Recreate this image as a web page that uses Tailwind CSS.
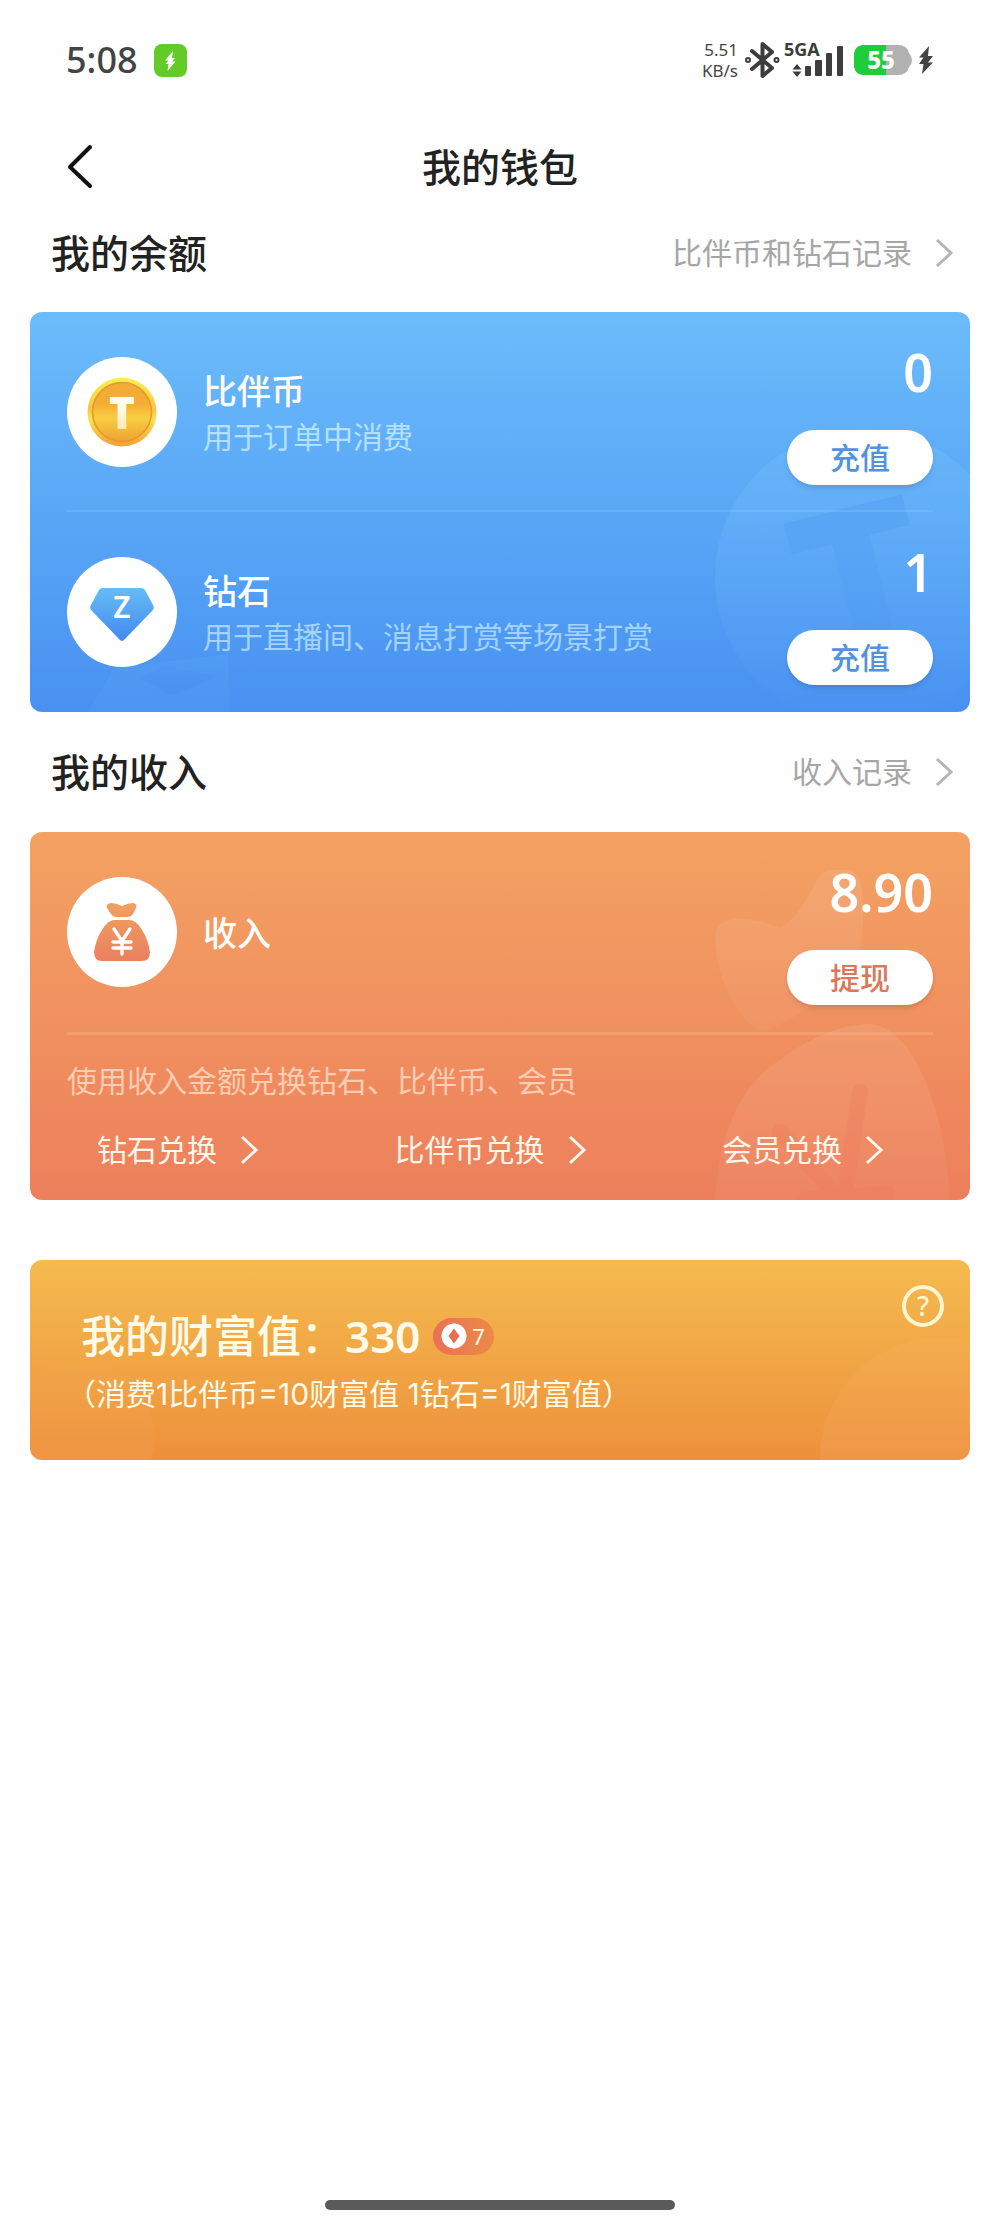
<!DOCTYPE html>
<html lang="zh-CN">
<head>
  <meta charset="UTF-8">
  <meta name="viewport" content="width=device-width, initial-scale=1.0">
  <title>我的钱包</title>
  <script src="https://cdn.jsdelivr.net/npm/@tailwindcss/browser@4"></script>
</head>
<body class="bg-[#fefefe] min-h-screen flex flex-col font-['Noto_Sans','Noto_Sans_CJK_SC',sans-serif] text-[#222]">

  <!-- status bar -->
  <div class="h-[120px] px-[66px] flex items-center justify-between text-[#444]">
    <div class="flex items-center gap-4">
      <span class="text-[36px] leading-[40px] font-medium">5:08</span>
      <svg class="size-[33px]" viewBox="0 0 33 33" aria-hidden="true">
        <rect width="33" height="33" rx="8" fill="#62cb28"/>
        <path d="M19 7 11 16.500h3.500L11.500 20h3L13.500 27l8-9.500h-3.500l3-3.500h-3z" fill="#fff"/>
      </svg>
    </div>
    <div class="flex items-center gap-[6px]">
      <div class="text-[17px] leading-[21px] text-right">5.51<br>KB/s</div>
      <svg class="w-[36px] h-[38px]" viewBox="1 0 36 38" fill="none" stroke="#3d3d3d" stroke-width="4" stroke-linejoin="round" stroke-linecap="round" aria-hidden="true">
        <path d="M9 10 29 27 19.500 35V3L29 11 9 28"/>
        <circle cx="5" cy="19" r="1"/>
        <circle cx="33.500" cy="19" r="1"/>
      </svg>
      <svg class="w-[58px] h-[36px] overflow-visible" viewBox="0 0 58 36" fill="#3d3d3d" aria-label="5GA">
        <text x="-2" y="14" font-family="Noto Sans" font-size="18" font-weight="700">5GA</text>
        <path d="M11 22l4.500 5.500h-9zM11 35l4.500-5.500h-9z"/>
        <rect x="19" y="24" width="6" height="10" rx="1"/>
        <rect x="29" y="18" width="7" height="16" rx="1"/>
        <rect x="40" y="11" width="6" height="23" rx="1"/>
        <rect x="51" y="4" width="6" height="30" rx="1"/>
      </svg>
      <div class="flex items-center gap-[6px] pl-1">
        <svg class="w-[58px] h-[30px] overflow-visible" viewBox="0 0 58 30" aria-label="55%">
          <path d="M11 0h33q9 0 11 8 3 3 3 7t-3 7q-2 8-11 8H11Q0 30 0 19v-8Q0 0 11 0z" fill="#b1b1b1"/>
          <path d="M11 0h21v30H11Q0 30 0 19v-8Q0 0 11 0z" fill="#1ecd3c"/>
          <text x="27" y="24" text-anchor="middle" font-family="Noto Sans" font-size="24" font-weight="800" fill="#fff">55</text>
        </svg>
        <svg class="w-4 h-[30px]" viewBox="0 0 16 30" fill="#444" aria-hidden="true">
          <path d="M11 1 1 12.500h4.500L1 19h4.500L4 29 15 17.500h-5l5-6.500h-5z"/>
        </svg>
      </div>
    </div>
  </div>

  <!-- title bar -->
  <header class="h-[94px] px-[66px] grid grid-cols-[1fr_auto_1fr] items-center">
    <button type="button" aria-label="返回" class="justify-self-start">
      <svg class="w-7 h-12" viewBox="0 0 28 48" fill="none" stroke="#111" stroke-width="4" stroke-linecap="round" stroke-linejoin="round">
        <path d="M24 4 4 24 24 43"/>
      </svg>
    </button>
    <h1 class="text-[39px] leading-[48px] font-medium">我的钱包</h1>
  </header>

  <main class="px-[30px] flex flex-col">
    <!-- balance -->
    <section>
      <div class="h-[98px] pb-5 pl-[21px] pr-4 flex items-center justify-between">
        <h2 class="text-[39px] leading-[48px] font-medium">我的余额</h2>
        <a href="#" class="flex items-center gap-[22px] text-[30px] leading-[36px] text-[#a6a6a6]">比伴币和钻石记录
          <svg class="w-5 h-[30px]" viewBox="0 0 20 30" fill="none" stroke="#b5b5b5" stroke-width="3"><path d="M3 2 17 15 3 28"/></svg>
        </a>
      </div>
      <div class="relative overflow-hidden rounded-xl bg-linear-to-b from-[#6cbcfb] to-[#4891f1] text-white">
        <svg class="absolute right-0 bottom-0 w-[260px] h-[280px] overflow-visible" viewBox="0 0 260 280" aria-hidden="true">
          <defs>
            <linearGradient id="coinMark" x1="0" y1="0" x2="0" y2="1">
              <stop offset="0" stop-color="#7cc6ff" stop-opacity=".3"/>
              <stop offset="1" stop-color="#7cc6ff" stop-opacity="0"/>
            </linearGradient>
            <linearGradient id="coinT" x1="0" y1="0" x2="0" y2="1">
              <stop offset="0" stop-color="#4a97ee" stop-opacity=".4"/>
              <stop offset="1" stop-color="#4a97ee" stop-opacity=".1"/>
            </linearGradient>
          </defs>
          <circle cx="153" cy="145" r="148" fill="url(#coinMark)"/>
          <text x="150" y="236" transform="rotate(-14 150 145)" text-anchor="middle" font-family="Noto Sans" font-size="226" font-weight="800" fill="url(#coinT)">T</text>
        </svg>
        <svg class="absolute left-[50px] bottom-0 w-[160px] h-[70px]" viewBox="0 0 160 70" aria-hidden="true">
          <path d="M8 70 34 26 148 12l2 58z" fill="#7cc6ff" fill-opacity=".08"/>
          <path d="M60 36l24-12 54 10-46 20z" fill="#4088ea" fill-opacity=".2"/>
        </svg>

        <div class="relative h-[200px] px-[37px] flex items-center gap-[26px]">
          <div class="size-[110px] rounded-full bg-white flex items-center justify-center">
            <svg class="size-[70px]" viewBox="0 0 70 70" aria-hidden="true">
              <defs>
                <linearGradient id="rim" x1="0" y1="0" x2="0" y2="1">
                  <stop offset="0" stop-color="#fdf04f"/>
                  <stop offset=".45" stop-color="#f9c63c"/>
                  <stop offset=".6" stop-color="#fde04d"/>
                  <stop offset="1" stop-color="#f3a032"/>
                </linearGradient>
                <linearGradient id="face" x1="0" y1="0" x2="0" y2="1">
                  <stop offset="0" stop-color="#f3ab3a"/>
                  <stop offset=".35" stop-color="#f5ac33"/>
                  <stop offset=".6" stop-color="#f8cd3f"/>
                  <stop offset="1" stop-color="#eda236"/>
                </linearGradient>
                <linearGradient id="coinLetter" x1="0" y1="0" x2="0" y2="1">
                  <stop offset=".4" stop-color="#fffdf4"/>
                  <stop offset="1" stop-color="#fbdd8a"/>
                </linearGradient>
              </defs>
              <circle cx="35" cy="35" r="34.500" fill="url(#rim)"/>
              <circle cx="35" cy="35" r="29.500" fill="url(#face)" stroke="#e3992f" stroke-width="1.500"/>
              <text x="35" y="52" text-anchor="middle" font-family="Noto Sans" font-size="44" font-weight="900" fill="url(#coinLetter)">T</text>
            </svg>
          </div>
          <div class="flex-1 pt-[2px]">
            <h3 class="text-[34px] leading-[48px] font-medium">比伴币</h3>
            <p class="text-[30px] leading-[44px] text-[#b4e1ff]">用于订单中消费</p>
          </div>
          <div class="h-[146px] flex flex-col items-end justify-between">
            <span class="text-[52px] leading-[66px] font-semibold">0</span>
            <button type="button" class="w-[146px] h-[55px] rounded-full bg-white shadow-md text-[30px] leading-[36px] font-medium text-[#5293da]">充值</button>
          </div>
        </div>
        <div class="absolute inset-x-[37px] top-[198px] h-[2px] bg-white/10"></div>
        <div class="relative h-[200px] px-[37px] flex items-center gap-[26px]">
          <div class="size-[110px] rounded-full bg-white flex items-center justify-center">
            <svg class="w-[64px] h-[54px] mt-1" viewBox="0 0 64 54" aria-hidden="true">
              <defs>
                <linearGradient id="gem" x1="0" y1="0" x2="0" y2="1">
                  <stop offset="0" stop-color="#66bcf4"/>
                  <stop offset="1" stop-color="#4389f2"/>
                </linearGradient>
              </defs>
              <path d="M13 1h38q3 0 4 2l8 15q2 3-1 6L34 53q-2 2-4 0L2 24q-3-3-1-6L9 3q1-2 4-2z" fill="url(#gem)"/>
              <text x="32" y="31" text-anchor="middle" font-family="Noto Sans" font-size="30" font-weight="600" fill="#fff">Z</text>
            </svg>
          </div>
          <div class="flex-1 pt-[2px]">
            <h3 class="text-[34px] leading-[48px] font-medium">钻石</h3>
            <p class="text-[30px] leading-[44px] text-[#a3d3ff]">用于直播间、消息打赏等场景打赏</p>
          </div>
          <div class="h-[146px] flex flex-col items-end justify-between">
            <span class="text-[52px] leading-[66px] font-semibold">1</span>
            <button type="button" class="w-[146px] h-[55px] rounded-full bg-white shadow-md text-[30px] leading-[36px] font-medium text-[#5293da]">充值</button>
          </div>
        </div>
      </div>
    </section>

    <!-- income -->
    <section>
      <div class="h-[120px] pl-[21px] pr-4 flex items-center justify-between">
        <h2 class="text-[39px] leading-[48px] font-medium">我的收入</h2>
        <a href="#" class="flex items-center gap-[22px] text-[30px] leading-[36px] text-[#a6a6a6]">收入记录
          <svg class="w-5 h-[30px]" viewBox="0 0 20 30" fill="none" stroke="#b5b5b5" stroke-width="3"><path d="M3 2 17 15 3 28"/></svg>
        </a>
      </div>
      <div class="relative overflow-hidden rounded-xl bg-linear-to-b from-[#f3a262] to-[#ed7f5c] text-white">
        <svg class="absolute right-0 bottom-0 w-[260px] h-[330px]" viewBox="0 0 260 330" aria-hidden="true">
          <defs>
            <linearGradient id="bagMark" x1="0" y1="0" x2="0" y2="1">
              <stop offset="0" stop-color="#fff" stop-opacity=".09"/>
              <stop offset="1" stop-color="#fff" stop-opacity=".04"/>
            </linearGradient>
          </defs>
          <path d="M6 62C10 42 48 48 70 58 90 46 98 26 108 8c10-14 36-14 42 2 6 22 3 60-3 92C120 122 90 146 62 158q-10 6-18 0C20 136 2 94 6 62z" fill="url(#bagMark)"/>
          <path d="M5 330C8 280 22 220 70 190c24-18 54-34 86-36 24 0 42 20 54 46 20 40 28 90 30 130z" fill="url(#bagMark)"/>
          <g stroke="#ea7a58" stroke-opacity=".3" stroke-width="16" stroke-linecap="round" fill="none">
            <path d="M150 222 134 330M70 262 130 330M94 330l84-6"/>
          </g>
        </svg>

        <div class="relative h-[200px] px-[37px] flex items-center gap-[26px]">
          <div class="size-[110px] rounded-full bg-white flex items-center justify-center">
            <svg class="w-[56px] h-[60px]" viewBox="0 0 56 60" aria-hidden="true">
              <defs>
                <linearGradient id="bag" gradientUnits="userSpaceOnUse" x1="0" y1="0" x2="0" y2="60">
                  <stop offset="0" stop-color="#f0a160"/>
                  <stop offset="1" stop-color="#ea7f60"/>
                </linearGradient>
              </defs>
              <path d="M17 1q5 0 11 3 6-3 11-3 5 1 3 5l-3 6q-2 3-5 3H22q-3 0-5-3l-4-6q-2-4 4-5z" fill="url(#bag)"/>
              <path d="M20 18h16q6 0 12 10 6 9 8 22 0 9-8 9H8q-8 0-8-9 2-13 8-22 6-10 12-10z" fill="url(#bag)"/>
              <path d="M20 27 28 39 36 27M28 39v13M19 40h18M19 46h18" fill="none" stroke="#fff" stroke-width="3.400" stroke-linecap="round"/>
            </svg>
          </div>
          <h3 class="flex-1 pt-[2px] text-[34px] leading-[48px] font-medium">收入</h3>
          <div class="h-[146px] flex flex-col items-end justify-between">
            <span class="text-[52px] leading-[66px] font-semibold">8.90</span>
            <button type="button" class="w-[146px] h-[55px] rounded-full bg-white shadow-md text-[30px] leading-[36px] font-medium text-[#db7858]">提现</button>
          </div>
        </div>
        <div class="relative mx-[37px] h-[3px] bg-[#f5b384]/40"></div>
        <p class="relative px-[37px] pt-6 text-[30px] leading-[44px] text-[#fbcdb2]">使用收入金额兑换钻石、比伴币、会员</p>
        <div class="relative pl-[67px] pr-[86px] pt-6 pb-7 flex justify-between text-[30px] leading-[45px] text-[#fff6ec]">
          <a href="#" class="flex items-center gap-[22px]">钻石兑换
            <svg class="w-5 h-[30px]" viewBox="0 0 20 30" fill="none" stroke="#fff6ec" stroke-width="3"><path d="M3 2 17 15 3 28"/></svg>
          </a>
          <a href="#" class="flex items-center gap-[22px]">比伴币兑换
            <svg class="w-5 h-[30px]" viewBox="0 0 20 30" fill="none" stroke="#fff6ec" stroke-width="3"><path d="M3 2 17 15 3 28"/></svg>
          </a>
          <a href="#" class="flex items-center gap-[22px]">会员兑换
            <svg class="w-5 h-[30px]" viewBox="0 0 20 30" fill="none" stroke="#fff6ec" stroke-width="3"><path d="M3 2 17 15 3 28"/></svg>
          </a>
        </div>
      </div>
    </section>

    <!-- wealth -->
    <section class="relative overflow-hidden mt-[60px] h-[200px] rounded-xl bg-linear-to-b from-[#f4bb4f] to-[#ed903b] text-[#fffbe8]">
      <div class="absolute right-[-90px] bottom-[-118px] size-[240px] rounded-full bg-linear-to-b from-white/3 to-[#ffb070]/30"></div>
      <div class="absolute left-[-28px] bottom-[-54px] size-[152px] rounded-full bg-linear-to-b from-white/1 to-[#ffb070]/20"></div>
      <div class="relative pl-[51px] pt-12">
        <div class="flex items-center">
          <h2 class="text-[44px] leading-[56px] font-medium">我的财富值：<span class="font-semibold">330</span></h2>
          <span class="ml-3 w-[61px] h-[37px] rounded-full bg-linear-to-r from-[#ea7057] to-[#ec8a45] flex items-center justify-center gap-[5px] text-[22px] leading-[30px]">
            <svg class="size-[26px]" viewBox="0 0 26 26" aria-hidden="true">
              <circle cx="13" cy="13" r="12.500" fill="#fff"/>
              <path d="M13 5.500 18.500 13 13 20.500 7.500 13z" fill="#e86f50"/>
            </svg>7
          </span>
        </div>
        <p class="pt-2 text-[30px] leading-[44px] font-['Inter','Noto_Sans_CJK_SC',sans-serif] [font-feature-settings:'halt']">（消费1比伴币=10财富值 1钻石=1财富值）</p>
      </div>
      <button type="button" aria-label="说明" class="absolute right-[26px] top-[25px] size-[42px] rounded-full border-4 border-[#fff6cf] flex items-center justify-center text-[27px] leading-[30px] font-medium text-[#fff6cf]">?</button>
    </section>
  </main>

  <div class="mt-auto mb-[15px] mx-auto w-[35%] h-[10px] rounded-full bg-[#5a5a5a]"></div>
</body>
</html>
